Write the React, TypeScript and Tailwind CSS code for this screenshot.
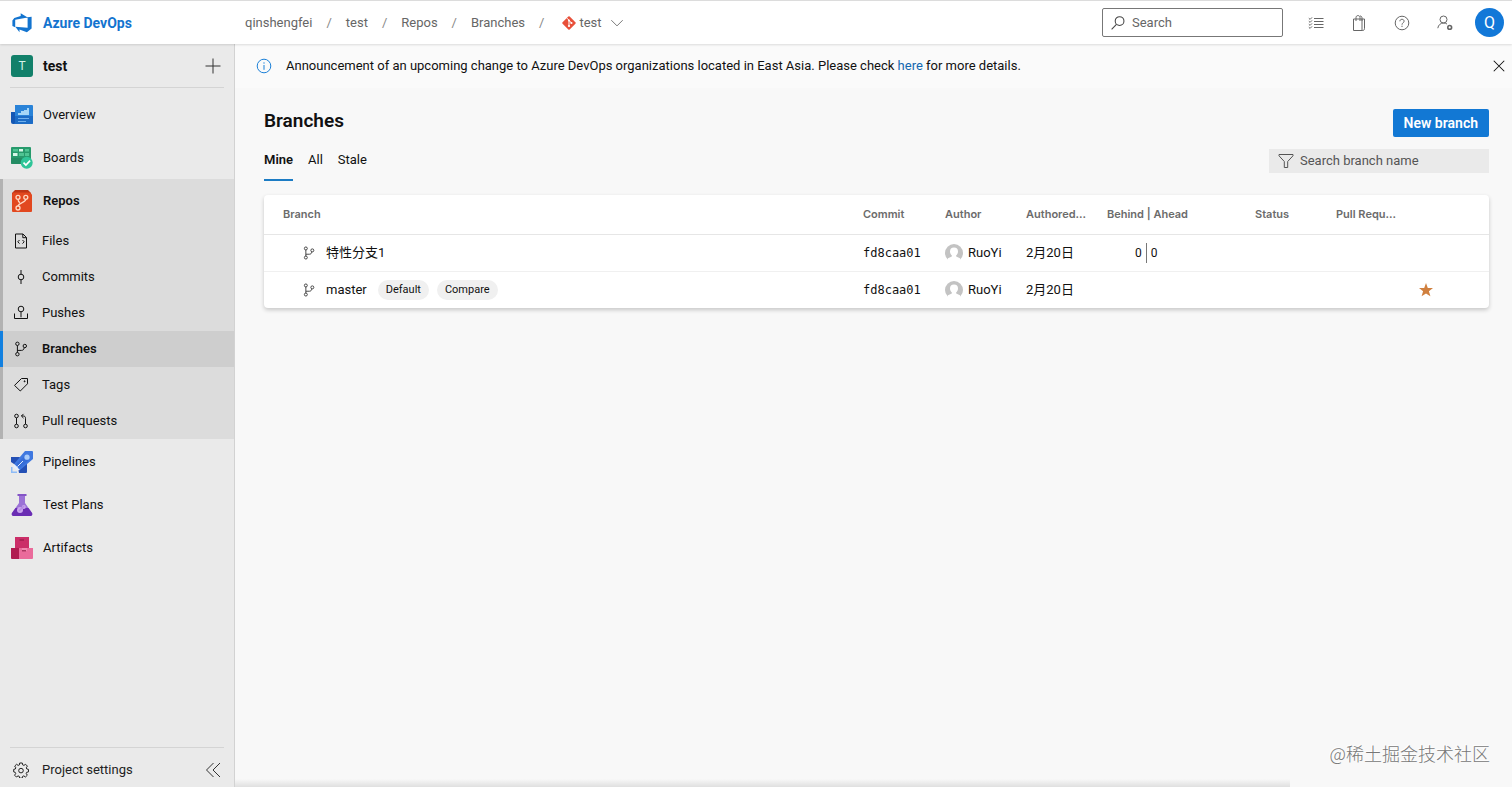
import type { ReactNode } from 'react';
import clsx from 'clsx';

interface NavEntry {
    label: string;
    icon: ReactNode;
    active?: boolean;
}

interface Branch {
    name: string;
    commit: string;
    author: string;
    date: string;
    behind?: number;
    ahead?: number;
    tags: string[];
    favorite?: boolean;
}

const branches: Branch[] = [
    { name: '特性分支1', commit: 'fd8caa01', author: 'RuoYi', date: '2月20日', behind: 0, ahead: 0, tags: [] },
    { name: 'master', commit: 'fd8caa01', author: 'RuoYi', date: '2月20日', tags: ['Default', 'Compare'], favorite: true },
];

const crumbs = ['qinshengfei', 'test', 'Repos', 'Branches'];

/* Line icons share one 16px box */
function LineIcon({ children, className = 'size-4' }: { children: ReactNode; className?: string }) {
    return (
        <svg viewBox="0 0 16 16" fill="none" stroke="currentColor" strokeWidth="1" className={clsx('shrink-0', className)} aria-hidden="true">
            {children}
        </svg>
    );
}

function BranchIcon({ className }: { className?: string }) {
    return (
        <LineIcon className={className}>
            <circle cx="4.4" cy="2.8" r="1.7" />
            <circle cx="4.4" cy="13.2" r="1.7" />
            <circle cx="11.8" cy="5" r="1.7" />
            <path d="M4.4 4.5v7M4.4 9.4h4c1.6 0 2.6-.8 2.8-2.8" />
        </LineIcon>
    );
}

function DevOpsLogo() {
    return (
        <svg viewBox="0 0 20 20" className="size-5 shrink-0" aria-hidden="true">
            <path
                fill="#1374cf"
                d="M19.6 3.8v11.6l-4.7 3.9-7.4-2.7v2.7L3.3 13.8l12.3 1V4.3L19.6 3.8ZM15.7 4.4 8.7.3v2.8L2.3 5 .4 7.5v5.6l2.8 1.2V6.8l12.5-2.4Z"
            />
        </svg>
    );
}

function GitIcon() {
    return (
        <svg viewBox="0 0 14 14" className="size-[14px] shrink-0" aria-hidden="true">
            <path fill="#e8503a" d="M6.3.6a1 1 0 0 1 1.4 0l5.7 5.7a1 1 0 0 1 0 1.4l-5.7 5.7a1 1 0 0 1-1.4 0L.6 7.7a1 1 0 0 1 0-1.4Z" />
            <path stroke="#fff" strokeWidth="1" d="M5 2.2l2 2v6M7 4.4l2.4 2.5" fill="none" />
            <circle cx="7" cy="4.4" r="1" fill="#fff" />
            <circle cx="7" cy="10" r="1.1" fill="#fff" />
            <circle cx="9.4" cy="7" r="1.1" fill="#fff" />
        </svg>
    );
}

const overviewIcon = (
    <svg viewBox="0 0 22 22" className="size-[22px]" aria-hidden="true">
        <path fill="#1558b4" d="M0 8h5v12H2a2 2 0 0 1-2-2Z" />
        <path fill="#2a83d8" d="M4 1h17a1 1 0 0 1 1 1v17a1 1 0 0 1-1 1H2.500c1 0 1.500-.6 1.500-1.600Z" />
        <path fill="#1c6cc6" d="M4 12h18v7a1 1 0 0 1-1 1H2.500c1 0 1.500-.6 1.500-1.600Z" />
        <path fill="#a5d6f7" d="M7 9h3V7h3V6h3V4h2v7H7Z" />
        <path stroke="#6fb0ec" strokeWidth="1" d="M7 14.500h11M7 17.500h8" />
    </svg>
);

const boardsIcon = (
    <svg viewBox="0 0 22 22" className="size-[22px]" aria-hidden="true">
        <rect width="20" height="17" rx="1" fill="#279a6c" />
        <path fill="#1f7d5a" d="M0 11h20v6H0Z" opacity=".5" />
        <path fill="#4fc493" d="M2 2h5v2.500H2ZM14 2h4v2.500h-4ZM8 6h5v3H8ZM14 6h4v3h-4Z" />
        <path fill="#d6f7e8" d="M8 2h4v2.500H8ZM2 6h4.500v3H2Z" />
        <circle cx="15.700" cy="15.700" r="6" fill="#2fc598" />
        <path stroke="#fff" strokeWidth="1.700" fill="none" d="m12.500 15.600 2.400 2.400 4.200-4.300" />
    </svg>
);

const reposIcon = (
    <svg viewBox="0 0 22 22" className="size-[22px]" aria-hidden="true">
        <path fill="#bd3516" d="M4 0h13l3 3v5H1V3Z" />
        <path fill="#e2481f" d="M2 2.500h17l2 2V21a1 1 0 0 1-1 1H2a1 1 0 0 1-1-1V4.500Z" />
        <g fill="none" stroke="#ffd9c4" strokeWidth="1.300">
            <circle cx="7" cy="7.300" r="2" />
            <circle cx="14.800" cy="7.300" r="2" />
            <circle cx="7" cy="18" r="2" />
            <path d="M7 9.300c0 2 .8 2.800 2 3.400M14.800 9.300c0 3.500-7 3-7.600 6.700" />
        </g>
    </svg>
);

const pipelinesIcon = (
    <svg viewBox="0 0 22 22" className="size-[22px]" aria-hidden="true">
        <path fill="#2450b5" d="M0 6h9l-3 9-6-4ZM16 12v9a1 1 0 0 1-1 1H8l-1-5Z" />
        <path fill="#3f78e0" d="M14 0h7a1 1 0 0 1 1 1v7L9 19l-6-6Z" />
        <path fill="#2f63cf" d="m5 13 9-8 4 4-9 8Z" opacity=".5" />
        <circle cx="16" cy="6.200" r="2.600" fill="#a9ccfa" />
        <path stroke="#dceafd" strokeWidth="1" d="m6.500 15.500 5.500-5.500" />
        <path fill="#8ebcf7" d="M0 16h1.500v4.500H6V22H0Z" />
        <path fill="#e7f0fd" d="m3 13 6 6-3 .5-3.500-3.500Z" />
    </svg>
);

const testPlansIcon = (
    <svg viewBox="0 0 22 22" className="size-[22px]" aria-hidden="true">
        <path fill="#9b72d6" d="M8 1h6v8l7 10c.8 1.300 0 3-1.500 3h-17C1 22 .2 20.300 1 19L8 9Z" />
        <path fill="#6a2db3" d="M4.500 14h13l3.500 5c.8 1.300 0 3-1.500 3h-17C1 22 .2 20.300 1 19Z" />
        <path fill="#8455c6" d="M6.500 0h9v2h-9Z" />
        <circle cx="9" cy="16" r="3" fill="#caa5ee" />
        <circle cx="12.800" cy="13" r="2" fill="#c9a6ec" />
        <path stroke="#b58ae4" strokeWidth="1.600" d="m8 17 5-5" />
    </svg>
);

const artifactsIcon = (
    <svg viewBox="0 0 22 22" className="size-[22px]" aria-hidden="true">
        <path fill="#cb2e68" d="M4 0h14v11H4Z" />
        <path fill="#b01c50" d="M0 11h8v11H1a1 1 0 0 1-1-1Z" />
        <path fill="#ea6b9b" d="M8 11h14v10a1 1 0 0 1-1 1H8Z" />
        <path fill="#f59dbd" d="M11 11h5v3h-5Z" opacity=".6" />
        <path stroke="#8d1440" strokeWidth="1" d="M8.500 3h4.500M11 13.800h4" />
    </svg>
);

const topNav: NavEntry[] = [
    { label: 'Overview', icon: overviewIcon },
    { label: 'Boards', icon: boardsIcon },
];

const bottomNav: NavEntry[] = [
    { label: 'Pipelines', icon: pipelinesIcon },
    { label: 'Test Plans', icon: testPlansIcon },
    { label: 'Artifacts', icon: artifactsIcon },
];

const repoNav: NavEntry[] = [
    {
        label: 'Files',
        icon: (
            <LineIcon>
                <path d="M2.500 1h7.500l3.500 3.500V15h-11ZM9.800 1v3.700h3.700" />
                <path d="M6.500 7 4.800 8.800l1.700 1.800M9.500 7l1.700 1.800-1.700 1.800" />
            </LineIcon>
        ),
    },
    {
        label: 'Commits',
        icon: (
            <LineIcon>
                <circle cx="8" cy="8" r="2.800" />
                <path d="M8 1v4.200M8 10.800V15" />
            </LineIcon>
        ),
    },
    {
        label: 'Pushes',
        icon: (
            <LineIcon>
                <circle cx="8" cy="4" r="2.800" />
                <path d="M8 6.800v5.500M1.500 8.500v5h13v-5" />
            </LineIcon>
        ),
    },
    { label: 'Branches', icon: <BranchIcon />, active: true },
    {
        label: 'Tags',
        icon: (
            <LineIcon>
                <path d="M8.500 1.500h6v5.300L7.300 14 1.500 8.400Z" />
                <circle cx="11.600" cy="4.300" r=".5" fill="currentColor" />
            </LineIcon>
        ),
    },
    {
        label: 'Pull requests',
        icon: (
            <LineIcon>
                <circle cx="3.500" cy="3" r="1.800" />
                <circle cx="3.500" cy="13" r="1.800" />
                <circle cx="12.500" cy="13" r="1.800" />
                <path d="M3.500 4.800v6.400M12.500 11.200V5.300c0-1.500-.7-2.300-2.200-2.300H8.500M10.500.9 8.400 3l2.100 2.100" />
            </LineIcon>
        ),
    },
];

function NavItem({ label, icon }: NavEntry) {
    return (
        <a href="#" className="flex h-[43px] items-center pl-[11px]">
            {icon}
            <span className="ml-[10px]">{label}</span>
        </a>
    );
}

function Sidebar() {
    return (
        <aside className="flex w-[235px] shrink-0 flex-col border-r border-[#d2d2d2] bg-[#eaeaea]">
            <div className="mx-[10px] flex h-11 items-center border-b border-[#d4d4d4]">
                <span className="ml-px flex size-[22px] items-center justify-center rounded-[3px] bg-[#12806a] text-xs text-[#d5f3ea]">T</span>
                <a href="#" className="ml-[10px] text-sm font-bold">test</a>
                <button type="button" aria-label="Create" className="mr-[3px] ml-auto text-[#333]">
                    <LineIcon>
                        <path d="M8 .5v15M.5 8h15" />
                    </LineIcon>
                </button>
            </div>
            <nav className="pt-[5px]" aria-label="Project">
                {topNav.map((item) => (
                    <NavItem key={item.label} {...item} />
                ))}
                <div className="mb-px bg-[#dcdcdc]">
                    <a href="#" className="flex h-11 items-center border-l-[3px] border-[#b2b2b2] pl-2 font-semibold">
                        {reposIcon}
                        <span className="ml-[10px]">Repos</span>
                    </a>
                    {repoNav.map((item) => (
                        <a
                            key={item.label}
                            href="#"
                            className={clsx(
                                'flex h-9 items-center border-l-[3px] pl-[10px]',
                                item.active ? 'border-[#1280e0] bg-[#cecece] font-semibold' : 'border-[#b2b2b2]'
                            )}
                        >
                            {item.icon}
                            <span className="ml-[13px]">{item.label}</span>
                        </a>
                    ))}
                </div>
                {bottomNav.map((item) => (
                    <NavItem key={item.label} {...item} />
                ))}
            </nav>
            <div className="mx-[10px] mt-auto flex h-10 items-center border-t border-[#d4d4d4] pt-[5px]">
                <a href="#" className="flex items-center pl-[3px] text-[#222]">
                    <LineIcon>
                        <path d="M6.700 1h2.600l.4 1.900 1.200.5 1.700-1.100 1.800 1.800-1.100 1.700.5 1.200 1.700.4v2.500l-1.800.4-.5 1.200 1.100 1.700-1.800 1.800-1.700-1.100-1.200.5-.4 1.800H6.700l-.4-1.800-1.200-.5-1.700 1.100-1.800-1.800 1.100-1.700-.5-1.200L.7 9.900V7.400L2.300 7l.5-1.200-1.100-1.700 1.800-1.800 1.700 1.100 1.200-.5Z" />
                        <circle cx="8" cy="8.600" r="2.300" />
                    </LineIcon>
                    <span className="ml-[13px]">Project settings</span>
                </a>
                <button type="button" aria-label="Collapse navigation" className="mr-[3px] ml-auto text-[#333]">
                    <LineIcon>
                        <path d="M8.500 1 1.500 8l7 7M15 1 8 8l7 7" />
                    </LineIcon>
                </button>
            </div>
        </aside>
    );
}

function Header() {
    const iconButton = 'flex h-8 w-[43px] items-center justify-center text-[#666]';

    return (
        <header className="z-10 flex h-11 items-center border-t border-[#dcdcdc] bg-white shadow-[0_1px_2px_rgba(0,0,0,0.12)]">
            <a href="#" className="flex w-[235px] shrink-0 items-center pl-3 font-bold text-[#1374cf]">
                <DevOpsLogo />
                <span className="ml-[11px] text-sm">Azure DevOps</span>
            </a>
            <nav className="flex items-center pl-[10px] text-[#666]" aria-label="Breadcrumb">
                {crumbs.map((crumb) => (
                    <span key={crumb} className="flex items-center">
                        <a href="#">{crumb}</a>
                        <span className="px-[14px] text-[#888]">/</span>
                    </span>
                ))}
                <button type="button" className="ml-1 flex items-center">
                    <GitIcon />
                    <span className="ml-[3px]">test</span>
                    <LineIcon className="ml-2 size-[14px]">
                        <path d="m1.500 4.800 6.500 6.500 6.500-6.500" />
                    </LineIcon>
                </button>
            </nav>
            <label className="mr-[11px] ml-auto flex h-[29px] w-[181px] items-center rounded-[2px] border border-[#777] px-2 text-[#444]">
                <LineIcon className="size-[14px]">
                    <circle cx="9.800" cy="5.800" r="5" strokeWidth="1.200" />
                    <path d="M6.200 9.500.7 15.200" strokeWidth="1.200" />
                </LineIcon>
                <input type="search" aria-label="Search" placeholder="Search" className="ml-[7px] w-full min-w-0 bg-transparent outline-none placeholder:text-[#666]" />
            </label>
            <button type="button" aria-label="Work items" className={iconButton}>
                <LineIcon>
                    <path d="M6 3.500h9.500M6 6.500h9.500M6 9.500h9.500M6 12.500h9.500" />
                    <path d="m.8 3.200 1.300 1.200L4 2.400M.8 6.200l1.300 1.200L4 5.400M.8 9.200l1.300 1.200L4 8.400M.8 12.200l1.300 1.200L4 11.400" />
                </LineIcon>
            </button>
            <button type="button" aria-label="Marketplace" className={iconButton}>
                <LineIcon>
                    <path d="M2.500 4h8.500v11.500h-8.500ZM11 4h2.500v9.500c0 1.200-.6 2-1.800 2H9.500M5 6V2.600C5 1.400 5.800.6 7 .6s2 .8 2 2V6M9 1c1.400 0 2 .8 2 2v3" />
                </LineIcon>
            </button>
            <button type="button" aria-label="Help" className={iconButton}>
                <LineIcon>
                    <circle cx="8" cy="8" r="6.800" />
                    <path d="M5.900 6.300c0-1.300.9-2 2.100-2s2.100.8 2.100 1.900c0 1.600-2.100 1.700-2.100 3.500M8 10.700v1.300" />
                </LineIcon>
            </button>
            <button type="button" aria-label="User settings" className={iconButton}>
                <LineIcon>
                    <circle cx="6.500" cy="4.500" r="3.500" />
                    <path d="M.8 13.200C1.300 10 3.600 8 6.500 8c1.400 0 2.500.3 3.500 1" />
                    <circle cx="12.700" cy="12.400" r="1.900" strokeWidth="1.600" />
                </LineIcon>
            </button>
            <button type="button" aria-label="Account" className="mr-2 ml-[9px] size-[29px] shrink-0 rounded-full bg-[#1278d8] text-base text-white">
                Q
            </button>
        </header>
    );
}

function Avatar() {
    return (
        <svg viewBox="0 0 18 18" className="size-[18px] shrink-0" aria-hidden="true">
            <circle cx="9" cy="9" r="9" fill="#c3c3c3" />
            <path fill="#fff" d="M9 3.500a4 4 0 0 1 4 4c0 1.800-.8 3-1.900 3.900l.1 1.200 3.800 1.600 1 3.800H2l1-3.800 3.800-1.600.1-1.200C5.800 10.500 5 9.300 5 7.500a4 4 0 0 1 4-4Z" />
        </svg>
    );
}

function BranchTable() {
    return (
        <div className="mt-[14px] overflow-hidden rounded-[4px] bg-white shadow-[0_2px_4px_rgba(0,0,0,0.2)]">
            <table className="w-full table-fixed text-left">
                <colgroup>
                    <col />
                    <col className="w-[82px]" />
                    <col className="w-[81px]" />
                    <col className="w-[81px]" />
                    <col className="w-[148px]" />
                    <col className="w-[81px]" />
                    <col className="w-[82px]" />
                    <col className="w-[71px]" />
                </colgroup>
                <thead className="font-['Inter',sans-serif] text-[11px] text-[#6b6b6b]">
                    <tr className="h-[39px] border-b border-[#e6e6e6]">
                        <th className="pl-[19px] font-semibold">Branch</th>
                        <th className="font-semibold">Commit</th>
                        <th className="font-semibold">Author</th>
                        <th className="font-semibold">Authored...</th>
                        <th className="font-semibold">Behind | Ahead</th>
                        <th className="font-semibold">Status</th>
                        <th className="font-semibold">Pull Requ...</th>
                        <td />
                    </tr>
                </thead>
                <tbody>
                    {branches.map((branch) => (
                        <tr key={branch.name} className="h-[37px] border-b border-[#f0f0f0] last:border-b-0">
                            <td className="pl-[38px]">
                                <div className="flex items-center">
                                    <BranchIcon className="size-[14px] text-[#333]" />
                                    <a href="#" className="ml-[10px]">{branch.name}</a>
                                    <div className="ml-[11px] flex gap-2">
                                        {branch.tags.map((tag) => (
                                            <span key={tag} className="rounded-full bg-[#f0f0f0] px-2 text-[11px] leading-5">
                                                {tag}
                                            </span>
                                        ))}
                                    </div>
                                </div>
                            </td>
                            <td>
                                <a href="#" className="font-['DejaVu_Sans_Mono',monospace] text-xs">{branch.commit}</a>
                            </td>
                            <td>
                                <div className="flex items-center gap-[5px]">
                                    <Avatar />
                                    {branch.author}
                                </div>
                            </td>
                            <td>{branch.date}</td>
                            <td>
                                {branch.behind !== undefined && (
                                    <div className="flex items-center pl-7 text-xs">
                                        <span className="border-r border-[#777] pr-1 leading-5">{branch.behind}</span>
                                        <span className="pl-1">{branch.ahead}</span>
                                    </div>
                                )}
                            </td>
                            <td />
                            <td />
                            <td>
                                {branch.favorite && (
                                    <button type="button" aria-label="Remove from favorites" className="block text-[#d0803f]">
                                        <svg viewBox="0 0 16 16" className="size-4" fill="currentColor" aria-hidden="true">
                                            <path d="m8 1 1.800 4.900 5.200.2-4.100 3.200 1.500 5L8 11.400l-4.400 2.900 1.500-5L1 6.100l5.200-.2Z" />
                                        </svg>
                                    </button>
                                )}
                            </td>
                        </tr>
                    ))}
                </tbody>
            </table>
        </div>
    );
}

export default function App() {
    return (
        <div className="relative flex min-h-screen flex-col bg-[#f8f8f8] font-['Roboto','Noto_Sans_CJK_SC',sans-serif] text-[13px] leading-5 text-[#111]">
            <Header />
            <div className="flex flex-1">
                <Sidebar />
                <main className="flex min-w-0 flex-1 flex-col">
                    <div className="flex h-11 items-center bg-[#fafafa] pr-[6px] pl-[21px]">
                        <LineIcon className="size-4 text-[#1b80d8]">
                            <circle cx="8" cy="8" r="6.800" />
                            <path d="M8 7v4.800M8 4.300v1.400" />
                        </LineIcon>
                        <p className="ml-[14px]">
                            Announcement of an upcoming change to Azure DevOps organizations located in East Asia. Please check{' '}
                            <a href="#" className="text-[#1468b0]">here</a> for more details.
                        </p>
                        <button type="button" aria-label="Dismiss" className="ml-auto">
                            <LineIcon className="size-[14px]">
                                <path d="m2 2 12 12M14 2 2 14" strokeWidth="1.200" />
                            </LineIcon>
                        </button>
                    </div>
                    <div className="pr-[23px] pl-[29px]">
                        <div className="flex items-start justify-between pt-[21px]">
                            <h1 className="text-[19px] leading-6 font-semibold">Branches</h1>
                            <button type="button" className="h-7 rounded-[2px] bg-[#1278d4] px-[11px] text-sm font-semibold text-white">
                                New branch
                            </button>
                        </div>
                        <div className="mt-1 flex h-10 items-center justify-between">
                            <div role="tablist" className="flex h-full items-stretch gap-[15px]">
                                <button type="button" role="tab" aria-selected="true" className="border-b-2 border-[#1c7cc4] font-semibold">
                                    Mine
                                </button>
                                <button type="button" role="tab" aria-selected="false" className="border-b-2 border-transparent">
                                    All
                                </button>
                                <button type="button" role="tab" aria-selected="false" className="border-b-2 border-transparent">
                                    Stale
                                </button>
                            </div>
                            <label className="flex h-6 w-[220px] items-center bg-[#eaeaea] px-[9px] text-[#555]">
                                <LineIcon>
                                    <path d="M1 1.500h14v1.300L9.700 8.500v6H6.300v-6L1 2.800Z" />
                                </LineIcon>
                                <input
                                    type="text"
                                    aria-label="Search branch name"
                                    placeholder="Search branch name"
                                    className="ml-[6px] w-full min-w-0 bg-transparent outline-none placeholder:text-[#555]"
                                />
                            </label>
                        </div>
                        <BranchTable />
                    </div>
                    <div className="mt-auto mr-[222px] h-2 bg-gradient-to-b from-transparent to-black/10" />
                </main>
            </div>
            <span className="absolute right-[22px] bottom-[22px] font-['Noto_Sans_CJK_SC',sans-serif] text-lg leading-6 font-light text-[#777] [text-shadow:-1px_-1px_0_white]">
                @稀土掘金技术社区
            </span>
        </div>
    );
}
